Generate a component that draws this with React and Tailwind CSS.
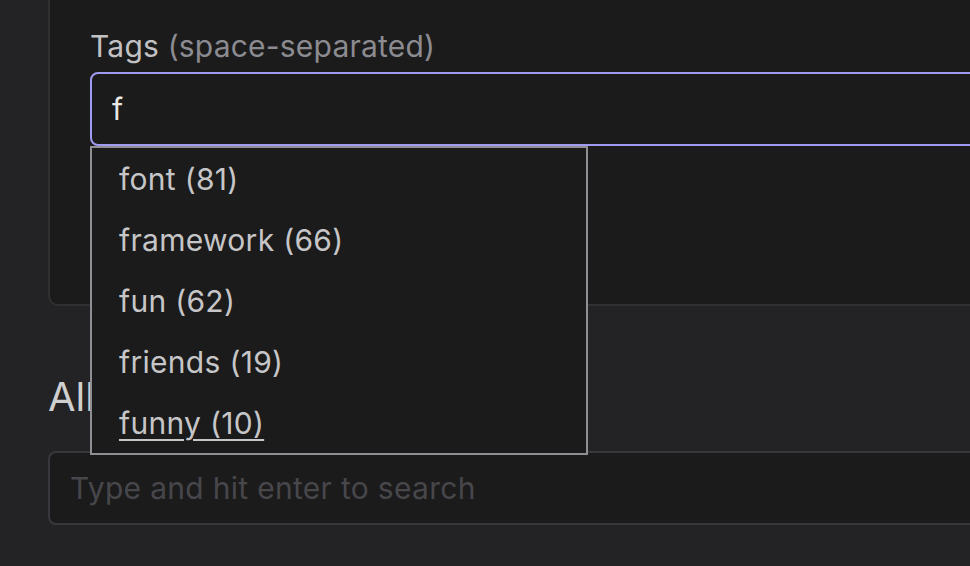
import React from "react";

const items = [
  { label: "font (81)" },
  { label: "framework (66)" },
  { label: "fun (62)" },
  { label: "friends (19)" },
  { label: "funny (10)", active: true },
];

export default function App() {
  return (
    <div
      className="relative w-[970px] h-[566px] overflow-hidden bg-[#232325]"
      style={{ fontFamily: "Inter, 'Noto Sans', sans-serif" }}
    >
      <div className="pl-[48px]">
        <div className="mt-[-20px] w-[1000px] border-2 border-[#303033] rounded-[10px] bg-[#1b1b1b] pl-[40px] pt-[47px] pb-[158px]">
          <div className="text-[30px] leading-[35px] tracking-[0.2px] text-[#c2c2c4]">
            Tags <span className="text-[#8b8b91]">(space-separated)</span>
          </div>
          <div className="relative mt-[8px]">
            <div className="h-[74px] border-2 border-[#a09bf2] rounded-[8px] bg-[#1b1b1b] pl-[20px] flex items-center text-[30px] text-[#e8e8e8]">
              f
            </div>
            <div className="absolute left-0 top-[74px] w-[498px] h-[309px] border-2 border-[#8e8e93] bg-[#1b1b1b] z-10 pt-[1px]">
              {items.map((it) => (
                <div
                  key={it.label}
                  className="h-[61px] flex items-center pl-[27px] text-[30px] tracking-[0.3px] text-[#c6c6c8]"
                >
                  <span
                    className={
                      it.active
                        ? "underline underline-offset-[5px] decoration-[2px]"
                        : ""
                    }
                  >
                    {it.label}
                  </span>
                </div>
              ))}
            </div>
          </div>
        </div>
        <div className="mt-[67px] text-[40px] leading-[48px] text-[#cfcfcf]">All tags</div>
        <div className="mt-[30px] w-[1000px] h-[74px] border-2 border-[#38383c] rounded-[8px] bg-[#1b1b1b] pl-[20px] flex items-center text-[30px] tracking-[0.3px] text-[#47474b]">
          Type and hit enter to search
        </div>
      </div>
    </div>
  );
}
